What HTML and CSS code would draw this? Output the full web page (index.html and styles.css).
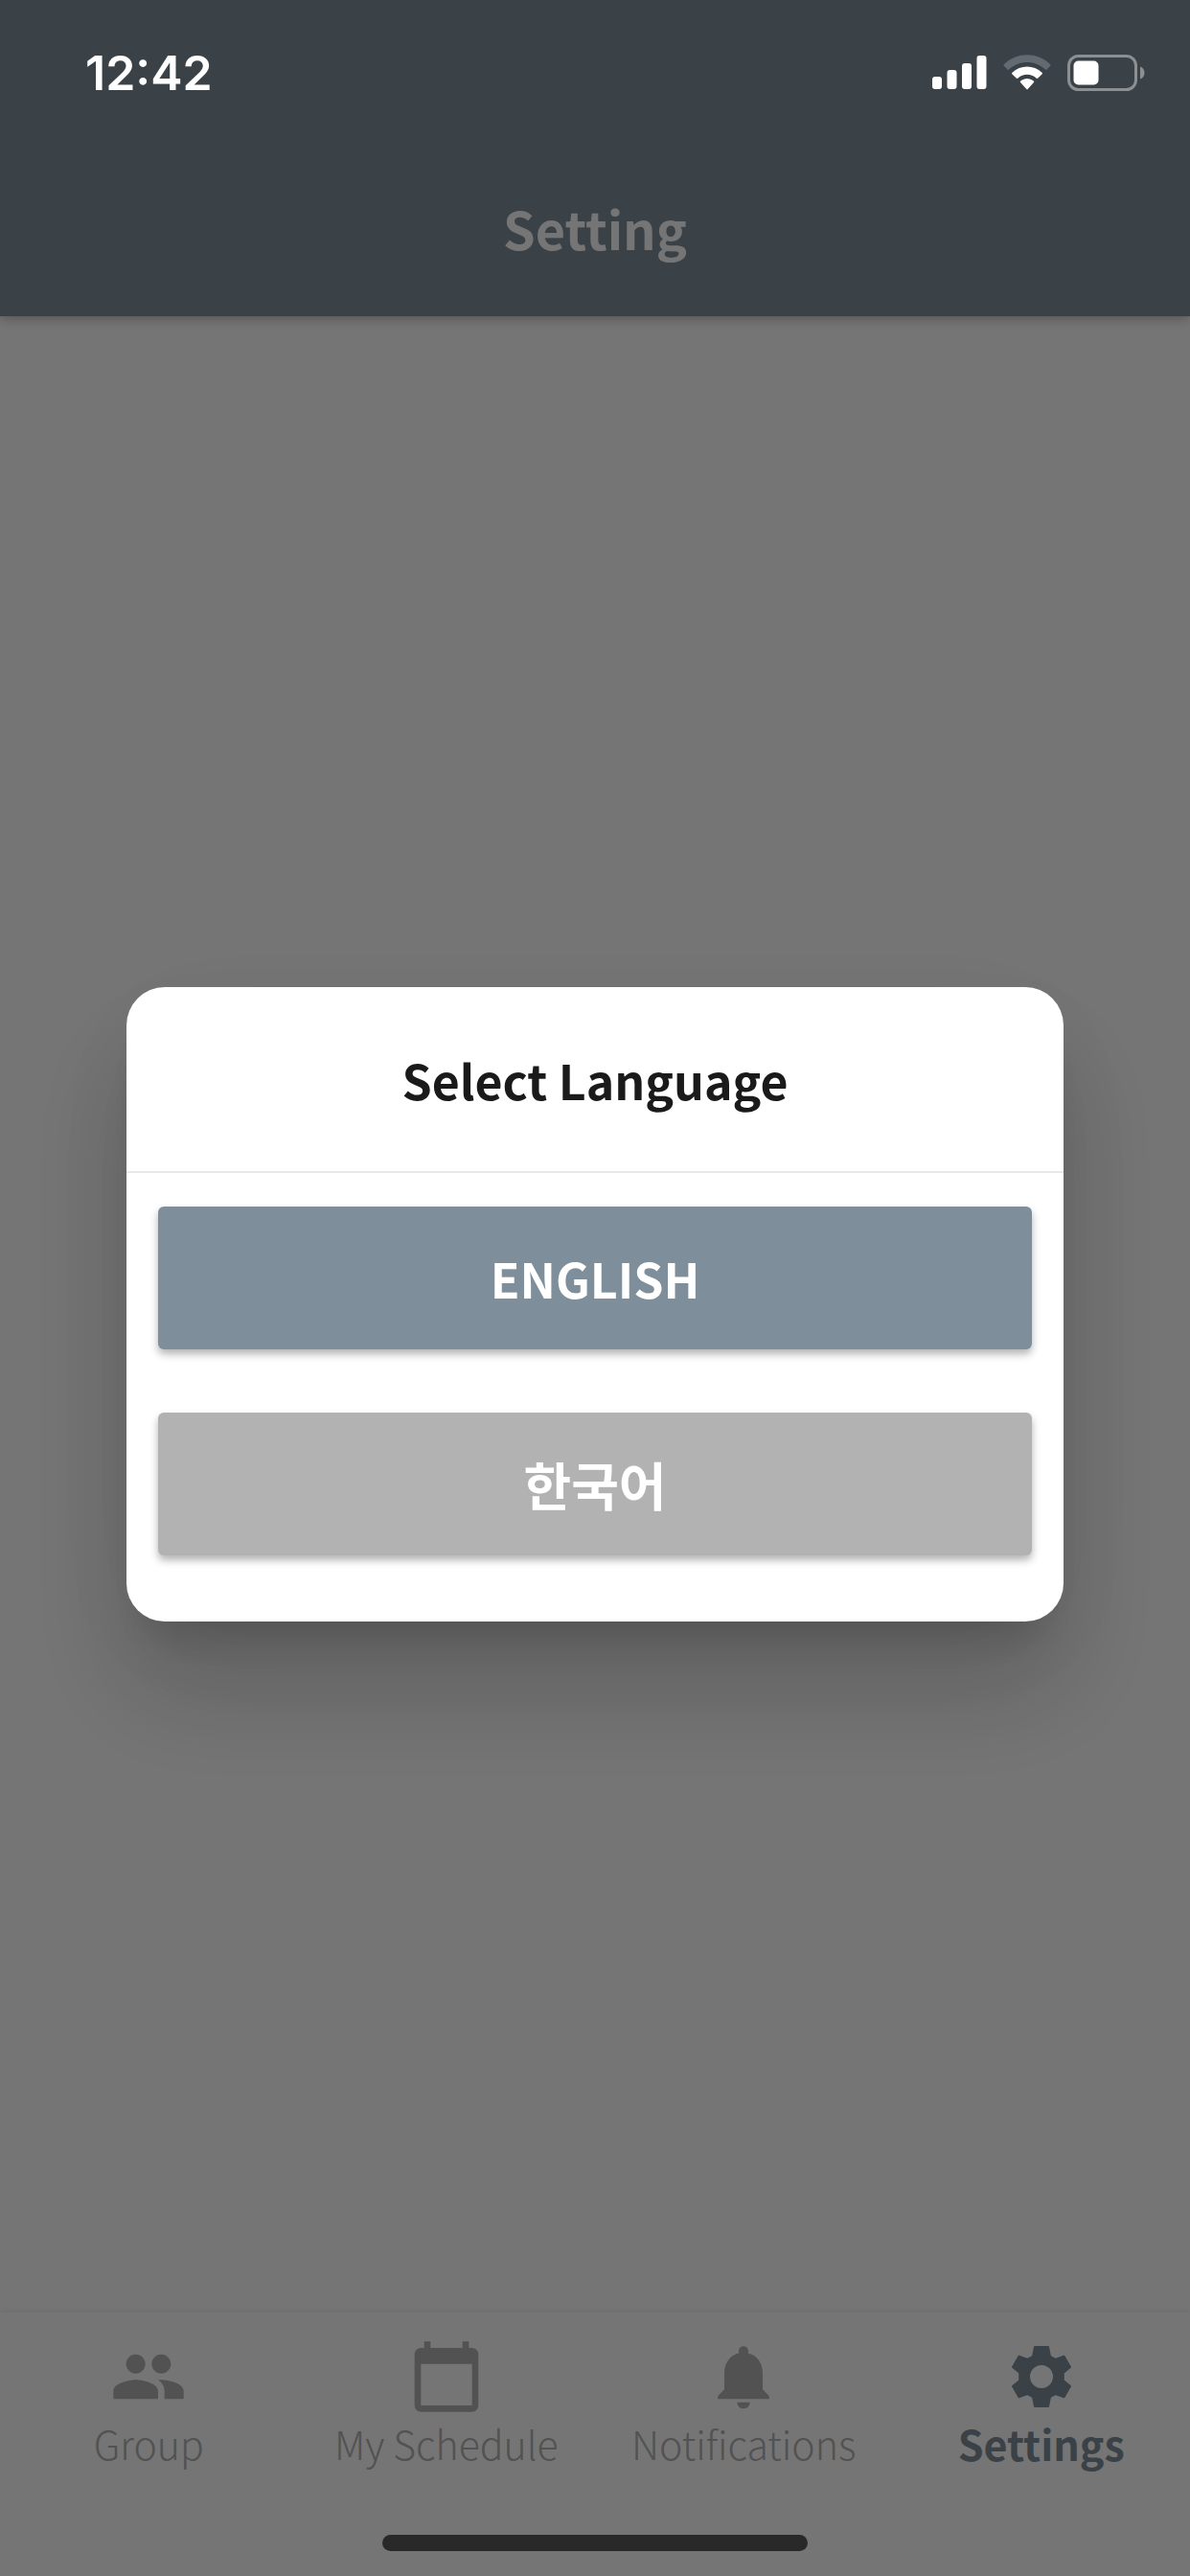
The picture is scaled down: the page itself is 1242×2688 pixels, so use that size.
FILE: index.html
```
<!DOCTYPE html>
<html lang="en">
<head>
  <meta charset="UTF-8">
  <title>Setting</title>
  <meta name="viewport" content="width=device-width, initial-scale=1.0">
  <link rel="stylesheet" href="styles.css">
</head>
<body>
  <div class="status-bar">
    <span class="time">12:42</span>
    <div class="status-icons">
      <svg width="57" height="36" viewBox="0 0 57 36" fill="#fff">
        <rect x="0" y="22" width="10" height="13" rx="3"/>
        <rect x="15.500" y="15" width="10" height="20" rx="3"/>
        <rect x="31" y="8" width="10" height="27" rx="3"/>
        <rect x="46.500" y="0" width="10" height="35" rx="3"/>
      </svg>
      <svg width="50" height="38" viewBox="0 0 50 38" fill="#fff">
        <path fill="#636b72" d="M.8 10.200C14-3.100 36-3.100 49.200 10.200c.5.500.5 1 0 1.500l-3.700 3.800c-.5.500-1 .5-1.500 0-10.500-10-27.500-10-38 0-.5.500-1 .5-1.500 0L.8 11.700c-.5-.5-.5-1 0-1.500z"/>
        <path d="M9.500 18.700c8.700-8.200 22.300-8.200 31 0 .6.600.6 1.200 0 1.700l-4.200 4.200c-.6.600-1.200.6-1.800 0-5.300-5-13.700-5-19 0-.6.600-1.200.6-1.800 0l-4.200-4.200c-.6-.5-.6-1.100 0-1.700z"/>
        <path d="M18.200 27.500c3.900-3.400 9.700-3.400 13.600 0 .6.500.6 1 .1 1.500l-6 6.700c-.6.700-1.200.7-1.800 0l-6-6.700c-.5-.5-.5-1 .1-1.500z"/>
      </svg>
      <svg width="82" height="38" viewBox="0 0 82 38">
        <rect x="1.500" y="1.500" width="70" height="35" rx="10" fill="none" stroke="#8c9093" stroke-width="3"/>
        <rect x="6.500" y="6.500" width="26" height="25" rx="5" fill="#fff"/>
        <path d="M76 12.500c6 2 6 11 0 13z" fill="#8c9093"/>
      </svg>
    </div>
  </div>

  <header class="app-bar">
    <h1>Setting</h1>
  </header>

  <main class="content"></main>

  <nav class="bottom-nav">
    <a class="tab" href="#group">
      <svg class="tab-icon" viewBox="0 0 24 24"><path d="M16 11c1.660 0 2.990-1.340 2.990-3S17.660 5 16 5c-1.660 0-3 1.340-3 3s1.340 3 3 3zm-8 0c1.660 0 2.990-1.340 2.990-3S9.660 5 8 5C6.340 5 5 6.340 5 8s1.340 3 3 3zm0 2c-2.330 0-7 1.170-7 3.500V19h14v-2.500c0-2.330-4.670-3.500-7-3.500zm8 0c-.290 0-.620.020-.970.050 1.160.840 1.970 1.970 1.970 3.450V19h6v-2.500c0-2.330-4.670-3.500-7-3.500z"/></svg>
      <span>Group</span>
    </a>
    <a class="tab" href="#schedule">
      <svg class="tab-icon" viewBox="0 0 24 24"><path d="M20 3h-1V1h-2v2H7V1H5v2H4c-1.100 0-2 .9-2 2v16c0 1.100.9 2 2 2h16c1.100 0 2-.9 2-2V5c0-1.100-.9-2-2-2zm0 18H4V8h16v13z"/></svg>
      <span>My Schedule</span>
    </a>
    <a class="tab" href="#notifications">
      <svg class="tab-icon" viewBox="0 0 24 24"><path d="M12 22c1.100 0 2-.9 2-2h-4c0 1.100.890 2 2 2zm6-6v-5c0-3.070-1.640-5.640-4.500-6.320V4c0-.830-.670-1.500-1.500-1.500s-1.500.670-1.500 1.500v.680C7.630 5.360 6 7.920 6 11v5l-2 2v1h16v-1l-2-2z"/></svg>
      <span>Notifications</span>
    </a>
    <a class="tab active" href="#settings" aria-current="page">
      <svg class="tab-icon" viewBox="0 0 80 80"><path fill-rule="evenodd" stroke="currentColor" stroke-width="2" stroke-linejoin="round" d="M33 9H47L49 19 54.500 22 63.500 18.800 70 30 62.800 36V44L70 50 63.500 61.200 54.500 58 49 61 47 71H33L31 61 25.500 58 16.500 61.200 10 50 17.200 44V36L10 30 16.500 18.800 25.500 22 31 19ZM40 27a13 13 0 1 0 0 26a13 13 0 1 0 0-26Z"/></svg>
      <span>Settings</span>
    </a>
  </nav>

  <div class="home-indicator"></div>

  <div class="overlay">
    <div class="dialog" role="dialog" aria-modal="true" aria-labelledby="dialogTitle">
      <h2 class="dialog-title" id="dialogTitle">Select Language</h2>
      <div class="dialog-body">
        <button class="btn btn-selected" type="button">ENGLISH</button>
        <button class="btn btn-korean" type="button" lang="ko">한국어</button>
      </div>
    </div>
  </div>
</body>
</html>
```
FILE: styles.css
```
* {
  box-sizing: border-box;
}

body {
  margin: 0;
  min-height: 100vh;
  display: flex;
  flex-direction: column;
  background: #fff;
  font-family: "Noto Sans CJK KR", "Noto Sans", sans-serif;
}

/* status bar stays bright above the overlay */
.status-bar {
  position: relative;
  z-index: 2;
  height: 132px;
  padding: 20px 46px 0 89px;
  display: flex;
  align-items: center;
  justify-content: space-between;
  color: #fff;
}

.time {
  font-family: Inter, sans-serif;
  font-size: 50px;
  font-weight: 600;
}

.status-icons {
  display: flex;
  align-items: center;
  gap: 17px;
}

.app-bar {
  height: 330px;
  margin-top: -132px;
  padding-top: 144px;
  display: flex;
  align-items: center;
  justify-content: center;
  background: #7e8f9b;
  box-shadow: 0 2px 12px rgba(0, 0, 0, 0.3);
}

.app-bar h1 {
  margin: 0;
  color: #fff;
  font-size: 54px;
  font-weight: 700;
}

.content {
  flex: 1;
}

.bottom-nav {
  display: flex;
  padding-top: 27px;
  background: #fff;
  box-shadow: 0 -2px 6px rgba(0, 0, 0, 0.06);
}

.tab {
  flex: 1;
  display: flex;
  flex-direction: column;
  align-items: center;
  color: #b2b2b2;
  font-size: 41px;
  font-weight: 300;
  line-height: 58px;
  text-decoration: none;
}

.tab-icon {
  width: 80px;
  height: 80px;
  fill: currentColor;
}

.tab.active {
  color: #7e8f9b;
  font-size: 43px;
  font-weight: 700;
}

.home-indicator {
  width: 444px;
  height: 17px;
  margin: 67px auto 26px;
  border-radius: 9px;
  background: #5a5a5a;
}

.overlay {
  position: fixed;
  inset: 0;
  z-index: 1;
  padding: 132px 132px 99px;
  display: flex;
  align-items: center;
  background: rgba(0, 0, 0, 0.54);
}

.dialog {
  width: 100%;
  border-radius: 40px;
  background: #fff;
  box-shadow: 0 33px 45px -21px rgba(0, 0, 0, 0.16),
    0 72px 114px 9px rgba(0, 0, 0, 0.16),
    0 27px 138px 24px rgba(0, 0, 0, 0.04);
}

.dialog-title {
  margin: 0;
  padding: 58px 32px;
  border-bottom: 2px solid #e8e8e8;
  color: #1a1a1a;
  font-size: 50px;
  font-weight: 700;
  line-height: 76px;
  text-align: center;
}

.dialog-body {
  display: flex;
  flex-direction: column;
  gap: 66px;
  padding: 35px 33px 69px;
}

.btn {
  height: 149px;
  border: none;
  border-radius: 6px;
  background: #b2b2b2;
  box-shadow: 0 5px 8px rgba(0, 0, 0, 0.3);
  color: #fff;
  font-family: inherit;
  font-size: 50px;
  font-weight: 700;
  cursor: pointer;
}

.btn-selected {
  background: #7e8f9b;
}

.btn-korean {
  font-size: 54px;
}
```
